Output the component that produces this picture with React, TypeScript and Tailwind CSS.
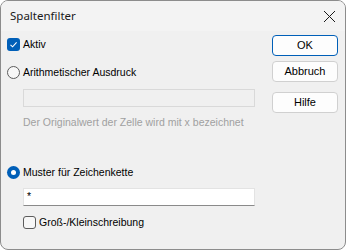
import { useState } from "react";

const Radio = ({ checked }: { checked: boolean }) =>
    checked ? (
        <span className="w-[13px] h-[13px] rounded-full bg-[#005fb8] flex items-center justify-center shrink-0">
            <span className="w-[5px] h-[5px] rounded-full bg-white" />
        </span>
    ) : (
        <span className="w-[13px] h-[13px] rounded-full border border-[#5c5c5c] bg-[#f7f7f7] shrink-0" />
    );

const Check = ({ checked }: { checked: boolean }) =>
    checked ? (
        <span className="w-[13px] h-[13px] rounded-[3px] bg-[#005fb8] flex items-center justify-center shrink-0">
            <svg width="9" height="9" viewBox="0 0 9 9">
                <path d="M1.5 4.8 L3.6 6.8 L7.6 2.4" fill="none" stroke="white" strokeWidth="1.1" />
            </svg>
        </span>
    ) : (
        <span className="w-[13px] h-[13px] rounded-[3px] border border-[#5c5c5c] bg-[#f7f7f7] shrink-0" />
    );

const Btn = ({ label, primary }: { label: string; primary?: boolean }) => (
    <button
        className={
            primary
                ? "w-[66px] h-[21px] rounded-[4px] border border-[#005fb8] bg-[#fdfdfd] text-[11px] text-black"
                : "w-[66px] h-[21px] rounded-[4px] border border-[#d0d0d0] bg-[#fdfdfd] text-[11px] text-black"
        }
    >
        {label}
    </button>
);

export default function App() {
    const [aktiv] = useState(true);

    return (
        <div className="w-[346px] h-[250px] bg-white font-['Liberation_Sans',Arial,sans-serif]">
            <div className="w-full h-full rounded-[8px] border border-[#8c8c8c] overflow-hidden flex flex-col bg-[#f0f0f0]">
                <div className="h-[30px] bg-[#f3f3f3] flex items-center justify-between pl-[9px] pr-[9px] shrink-0">
                    <span className="text-[11.5px] text-[#1a1a1a] font-['Noto_Sans',sans-serif]">Spaltenfilter</span>
                    <svg width="13" height="13" viewBox="0 0 13 13">
                        <path d="M1 1 L12 12 M12 1 L1 12" stroke="#1a1a1a" strokeWidth="1" />
                    </svg>
                </div>

                <div className="flex flex-1 text-[10.5px] text-black">
                    <div className="flex-1 pl-[6px] pt-[7px] flex flex-col">
                        <div className="h-[13px] flex items-center gap-[3px]">
                            <Check checked={aktiv} />
                            <span>Aktiv</span>
                        </div>

                        <div className="mt-[15px] h-[13px] flex items-center gap-[3px]">
                            <Radio checked={false} />
                            <span>Arithmetischer Ausdruck</span>
                        </div>

                        <div className="mt-[10px] ml-[16px] w-[232px] h-[18px] border border-[#d9d9d9] bg-[#f0f0f0]" />

                        <div className="mt-[9px] ml-[16px] h-[14px] flex items-center text-[#a0a0a0]">
                            Der Originalwert der Zelle wird mit x bezeichnet
                        </div>

                        <div className="mt-[36px] h-[13px] flex items-center gap-[3px]">
                            <Radio checked={true} />
                            <span>Muster für Zeichenkette</span>
                        </div>

                        <div className="mt-[9px] ml-[16px] w-[232px] h-[18px] bg-white border border-[#e3e3e3] border-b-[#8a8a8a] flex items-center pl-[3px]">
                            *
                        </div>

                        <div className="mt-[10px] ml-[16px] h-[13px] flex items-center gap-[3px]">
                            <Check checked={false} />
                            <span>Groß-/Kleinschreibung</span>
                        </div>
                    </div>

                    <div className="pt-[4px] pr-[7px] flex flex-col">
                        <Btn label="OK" primary />
                        <div className="mt-[5px]">
                            <Btn label="Abbruch" />
                        </div>
                        <div className="mt-[10px]">
                            <Btn label="Hilfe" />
                        </div>
                    </div>
                </div>
            </div>
        </div>
    );
}
